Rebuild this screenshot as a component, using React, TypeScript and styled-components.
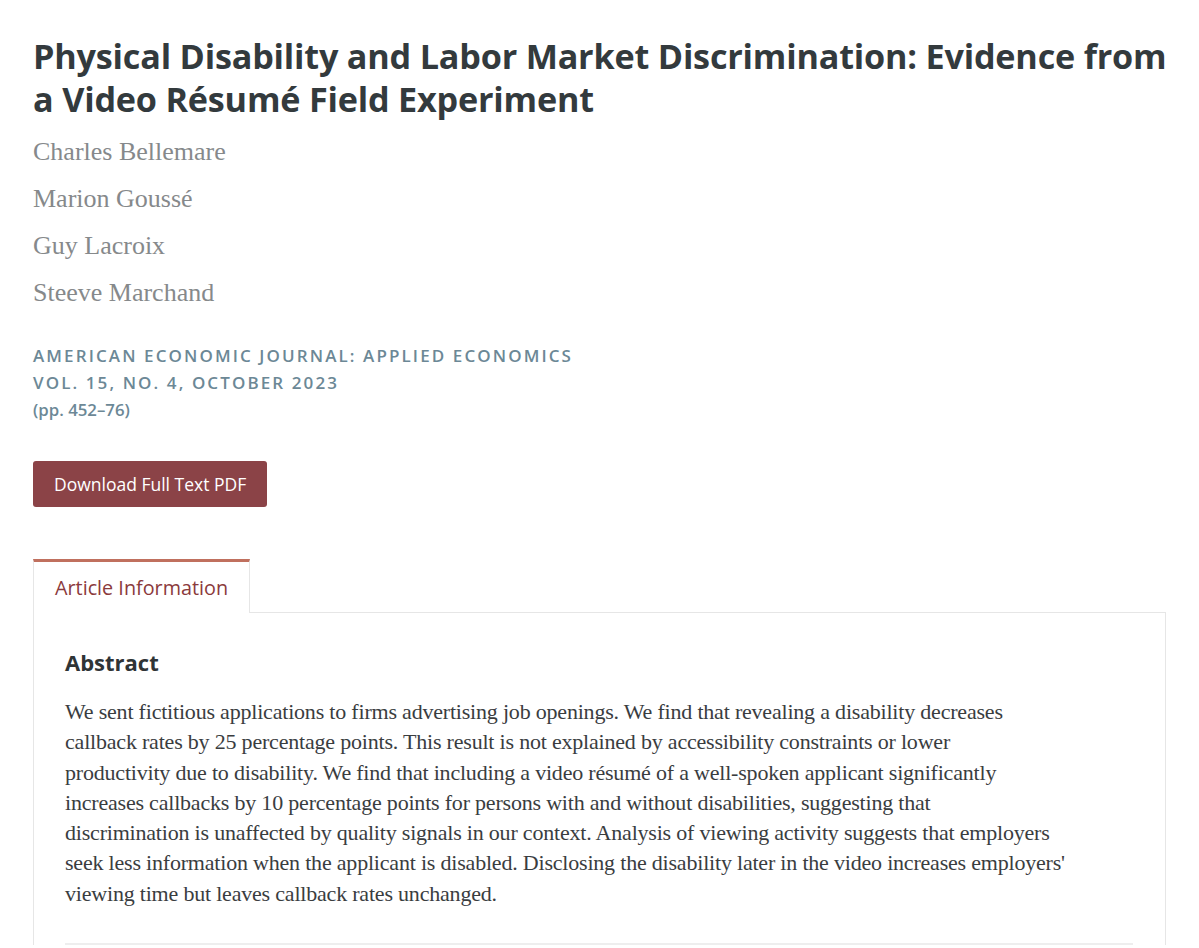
import React from 'react';
import styled, { createGlobalStyle } from 'styled-components';

const GlobalStyle = createGlobalStyle`
  html, body {
    margin: 0;
    padding: 0;
    background: #fff;
  }
  body {
    font-family: "Open Sans", "Noto Sans", sans-serif;
    color: #333a3d;
  }
`;

const Page = styled.main`
  padding: 34px 33px 0 33px;
  width: 1133px;
`;

const Title = styled.h1`
  margin: 0;
  font-family: "Open Sans", sans-serif;
  font-weight: 700;
  font-size: 34.2px;
  line-height: 43px;
  letter-spacing: -0.2px;
  white-space: nowrap;
  color: #333a3d;
`;

const Authors = styled.ul`
  list-style: none;
  margin: 8px 0 0 0;
  padding: 0;
`;

const Author = styled.li`
  font-family: "Liberation Serif", serif;
  font-size: 26px;
  line-height: 47px;
  color: #86898b;
`;

const Journal = styled.div`
  margin-top: 26px;
  display: flex;
  flex-direction: column;
`;

const JournalLine = styled.span<{ $small?: boolean }>`
  font-family: "Open Sans", sans-serif;
  font-weight: 600;
  font-size: ${p => (p.$small ? '16.8px' : '17px')};
  line-height: 27px;
  letter-spacing: ${p => (p.$small ? '0' : '2.1px')};
  color: #6c8896;
`;

const DownloadButton = styled.button`
  margin-top: 38px;
  height: 46px;
  padding: 0 21px;
  border: none;
  border-radius: 3px;
  background: #8b4347;
  color: #fff;
  font-family: "Open Sans", sans-serif;
  font-size: 17.5px;
  cursor: pointer;
`;

const Tabs = styled.div`
  margin-top: 52px;
  display: flex;
`;

const Tab = styled.div`
  height: 51px;
  padding: 0 21px;
  display: flex;
  align-items: center;
  border-top: 3px solid #c0705e;
  border-left: 1px solid #e6e6e6;
  border-right: 1px solid #e6e6e6;
  background: #fff;
  font-family: "Open Sans", sans-serif;
  font-size: 19.8px;
  color: #8b3a3c;
  margin-bottom: -1px;
  position: relative;
  z-index: 1;
`;

const Panel = styled.section`
  border: 1px solid #e6e6e6;
  border-bottom: none;
  padding: 34px 32px 0 31px;
`;

const SectionHeading = styled.h2`
  margin: 0;
  font-family: "Open Sans", sans-serif;
  font-weight: 700;
  font-size: 22px;
  line-height: 30px;
  color: #2f3436;
`;

const AbstractText = styled.p`
  margin: 20px 0 0 0;
  font-family: "Liberation Serif", serif;
  font-size: 22px;
  line-height: 30.3px;
  letter-spacing: -0.2px;
  color: #3a3d3f;
`;

const Line = styled.span`
  display: block;
  white-space: nowrap;
`;

const Divider = styled.hr`
  margin: 34px 0 0 0;
  border: none;
  border-top: 2px solid #eeeeee;
`;

const authors = ['Charles Bellemare', 'Marion Goussé', 'Guy Lacroix', 'Steeve Marchand'];

const abstractLines = [
  'We sent fictitious applications to firms advertising job openings. We find that revealing a disability decreases',
  'callback rates by 25 percentage points. This result is not explained by accessibility constraints or lower',
  'productivity due to disability. We find that including a video résumé of a well-spoken applicant significantly',
  'increases callbacks by 10 percentage points for persons with and without disabilities, suggesting that',
  'discrimination is unaffected by quality signals in our context. Analysis of viewing activity suggests that employers',
  "seek less information when the applicant is disabled. Disclosing the disability later in the video increases employers'",
  'viewing time but leaves callback rates unchanged.',
];

export default function App() {
  return (
    <>
      <GlobalStyle />
      <Page>
        <Title>
          Physical Disability and Labor Market Discrimination: Evidence from
          <br />
          a Video Résumé Field Experiment
        </Title>
        <Authors>
          {authors.map(a => (
            <Author key={a}>{a}</Author>
          ))}
        </Authors>
        <Journal>
          <JournalLine>AMERICAN ECONOMIC JOURNAL: APPLIED ECONOMICS</JournalLine>
          <JournalLine>VOL. 15, NO. 4, OCTOBER 2023</JournalLine>
          <JournalLine $small>(pp. 452–76)</JournalLine>
        </Journal>
        <DownloadButton>Download Full Text PDF</DownloadButton>
        <Tabs>
          <Tab>Article Information</Tab>
        </Tabs>
        <Panel>
          <SectionHeading>Abstract</SectionHeading>
          <AbstractText>
            {abstractLines.map((l, i) => (
              <Line key={i}>{l}</Line>
            ))}
          </AbstractText>
          <Divider />
        </Panel>
      </Page>
    </>
  );
}
